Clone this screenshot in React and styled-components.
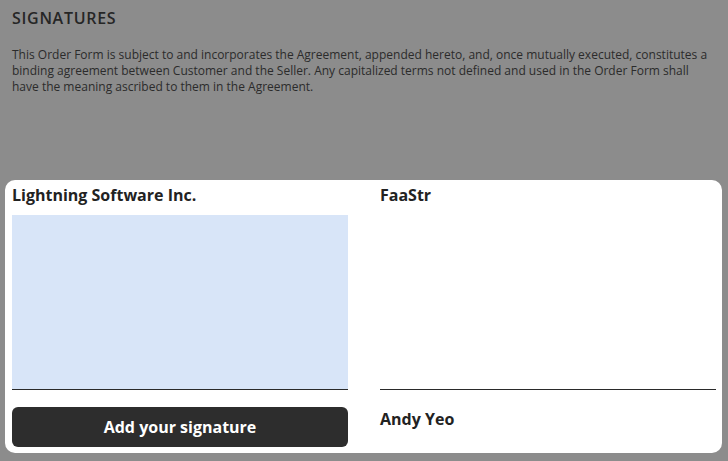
import React from "react";
import styled, { createGlobalStyle } from "styled-components";

const Global = createGlobalStyle`
  html, body { margin: 0; padding: 0; }
  body { background: #8c8c8c; font-family: "Open Sans", "Noto Sans", sans-serif; }
`;

const Page = styled.div`
  width: 728px;
  height: 461px;
  box-sizing: border-box;
  padding: 8px 5px 0 5px;
  display: flex;
  flex-direction: column;
`;

const Intro = styled.section`
  padding: 0 7px;
  color: #2b2b2b;
`;

const Heading = styled.h2`
  margin: 0;
  font-family: "Open Sans", sans-serif;
  font-weight: 600;
  font-size: 16px;
  line-height: 20px;
  letter-spacing: 0.7px;
  color: #262626;
`;

const Paragraph = styled.p`
  margin: 19px 0 0;
  font-size: 12px;
  line-height: 16px;
  font-family: "Open Sans", sans-serif;
`;

const Card = styled.div`
  margin-top: 85px;
  width: 717px;
  box-sizing: border-box;
  background: #fff;
  border-radius: 10px;
  padding: 4px 6px 6px 7px;
  display: grid;
  grid-template-columns: 336px 336px;
  column-gap: 32px;
`;

const Column = styled.div`
  display: flex;
  flex-direction: column;
`;

const Party = styled.div`
  font-weight: 700;
  font-size: 16px;
  line-height: 22px;
  color: #222;
  height: 22px;
`;

const SignArea = styled.div`
  margin-top: 9px;
  height: 174px;
  background: ${(p) => (p.$active ? "#d8e5f8" : "transparent")};
  border-bottom: 1px solid #2a2a2a;
`;

const Button = styled.button`
  margin-top: 17px;
  height: 40px;
  border: none;
  border-radius: 6px;
  background: #2d2d2d;
  color: #fff;
  font-family: "Open Sans", sans-serif;
  font-weight: 700;
  font-size: 16px;
`;

const Signer = styled.div`
  margin-top: 18px;
  font-weight: 700;
  font-size: 16px;
  line-height: 22px;
  color: #222;
`;

export default function App() {
  return (
    <>
      <Global />
      <Page>
        <Intro>
          <Heading>SIGNATURES</Heading>
          <Paragraph>
            This Order Form is subject to and incorporates the Agreement, appended hereto, and, once mutually executed, constitutes a
            binding agreement between Customer and the Seller. Any capitalized terms not defined and used in the Order Form shall
            have the meaning ascribed to them in the Agreement.
          </Paragraph>
        </Intro>
        <Card>
          <Column>
            <Party>Lightning Software Inc.</Party>
            <SignArea $active />
            <Button>Add your signature</Button>
          </Column>
          <Column>
            <Party>FaaStr</Party>
            <SignArea />
            <Signer>Andy Yeo</Signer>
          </Column>
        </Card>
      </Page>
    </>
  );
}
